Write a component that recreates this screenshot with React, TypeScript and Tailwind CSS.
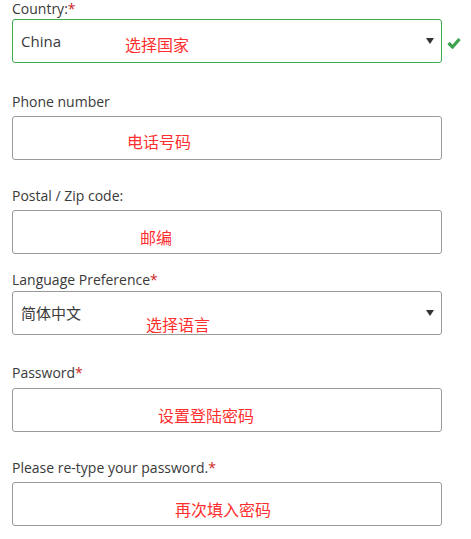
import React from "react";

const Req = () => <span className="text-[#cc1f1f]">*</span>;

const Arrow = () => (
  <svg width="8" height="6" viewBox="0 0 8 6" className="absolute right-[7px] top-[18px]">
    <polygon points="0,0 8,0 4,6" fill="#333" />
  </svg>
);

const App = () => {
  return (
    <main
      className="relative w-[471px] h-[539px] bg-white text-[#3a3a3a] overflow-hidden"
      style={{ fontFamily: '"Open Sans", "Noto Sans CJK SC", sans-serif' }}
    >
      <div className="flex flex-col pl-[12px] w-[471px]">
        {/* Country */}
        <label className="text-[14px] leading-[20px] mt-[-1px]">
          Country:<Req />
        </label>
        <div className="flex items-center mt-[0px]">
          <div className="relative shrink-0 w-[430px] h-[44px] border border-[#3daa4f] rounded-[3px] flex items-center pl-[8px] text-[15px]">
            China
            <Arrow />
          </div>
          <svg width="14" height="12" viewBox="0 0 14 12" className="shrink-0 ml-[5px] mt-[4px]">
            <polyline points="1.5,6 5.5,10 12.5,2" fill="none" stroke="#3da34f" strokeWidth="3.2" />
          </svg>
        </div>

        {/* Phone */}
        <label className="text-[14px] leading-[20px] mt-[29px]">Phone number</label>
        <div className="w-[430px] h-[44px] border border-[#999] rounded-[3px] mt-[4px]" />

        {/* Postal */}
        <label className="text-[14px] leading-[20px] mt-[26px]">Postal / Zip code:</label>
        <div className="w-[430px] h-[44px] border border-[#999] rounded-[3px] mt-[4px]" />

        {/* Language */}
        <label className="text-[14px] leading-[20px] mt-[16px]">
          Language Preference<Req />
        </label>
        <div className="relative w-[430px] h-[44px] border border-[#999] rounded-[3px] mt-[1px] flex items-center pl-[8px] text-[15px]">
          简体中文
          <Arrow />
        </div>

        {/* Password */}
        <label className="text-[14px] leading-[20px] mt-[28px]">
          Password<Req />
        </label>
        <div className="w-[430px] h-[44px] border border-[#999] rounded-[3px] mt-[5px]" />

        {/* Re-type */}
        <label className="text-[14px] leading-[20px] mt-[26px]">
          Please re-type your password.<Req />
        </label>
        <div className="w-[430px] h-[44px] border border-[#999] rounded-[3px] mt-[4px]" />
      </div>

      {/* red annotations */}
      <span className="absolute left-[125px] top-[35px] text-[16px] leading-[20px] text-[#ff2e2e]">选择国家</span>
      <span className="absolute left-[127px] top-[132px] text-[16px] leading-[20px] text-[#ff2e2e]">电话号码</span>
      <span className="absolute left-[140px] top-[228px] text-[16px] leading-[20px] text-[#ff2e2e]">邮编</span>
      <span className="absolute left-[146px] top-[315px] text-[16px] leading-[20px] text-[#ff2e2e]">选择语言</span>
      <span className="absolute left-[158px] top-[406px] text-[16px] leading-[20px] text-[#ff2e2e]">设置登陆密码</span>
      <span className="absolute left-[175px] top-[500px] text-[16px] leading-[20px] text-[#ff2e2e]">再次填入密码</span>
    </main>
  );
};

export default App;
